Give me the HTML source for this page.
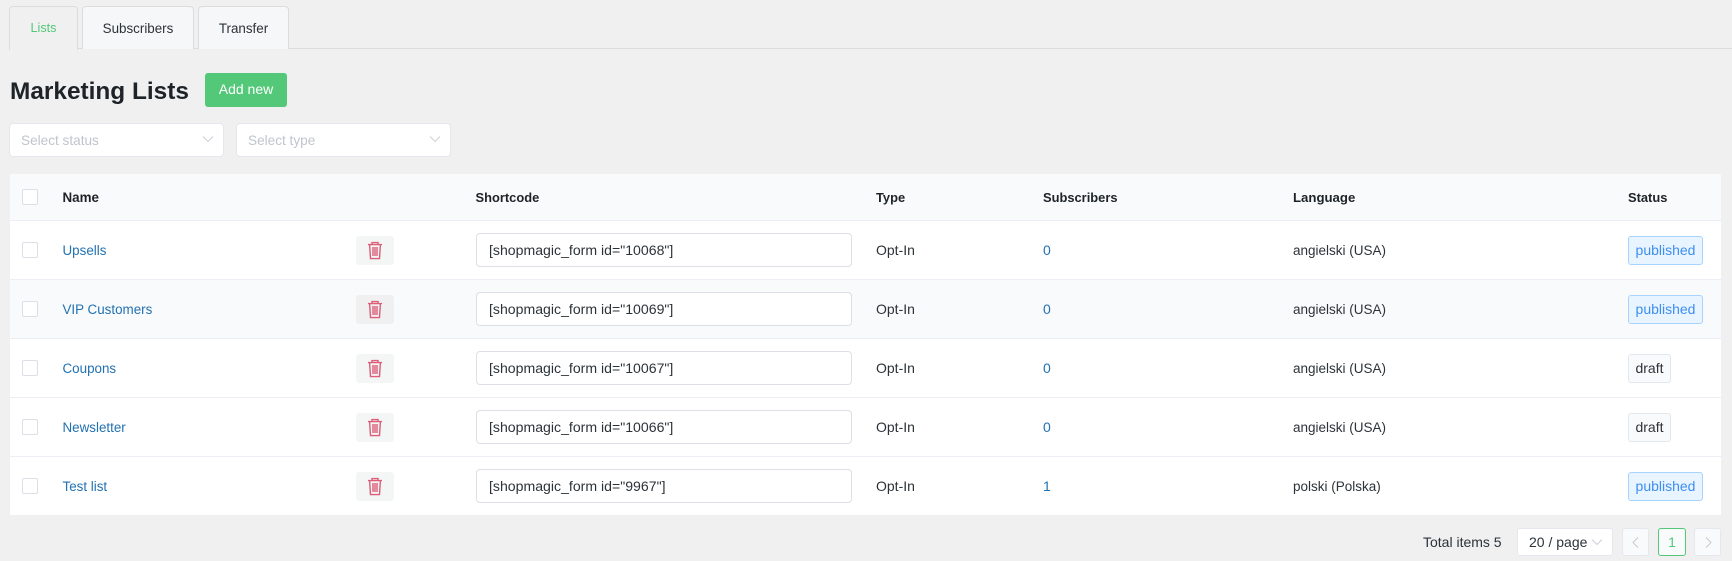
<!DOCTYPE html>
<html><head><meta charset="utf-8"><style>
html,body{margin:0;padding:0;width:1732px;height:561px;overflow:hidden;background:#f0f0f1;font-family:"Liberation Sans",sans-serif;font-size:13.4px;color:#2c3338}
div,span{position:absolute;box-sizing:border-box;white-space:nowrap}
.t{line-height:20px;height:20px}
.tab{top:6px;height:43px;border:1px solid #dcdcde;border-bottom:none;border-radius:4px 4px 0 0;background:#f6f7f9;text-align:center;line-height:43px;font-size:13.4px}
.sel{top:123px;height:34px;width:215px;background:#fff;border:1px solid #e4e7ed;border-radius:4px;color:#c0c4cc;line-height:34px;padding-left:11px;font-size:13.6px}
.row{left:10px;width:1711px;height:59px;background:#fff;border-bottom:1px solid #ebeef5}
.alt{background:#f9fafc}
.cb{left:22px;width:16px;height:16px;background:#fff;border:1px solid #dcdfe6;border-radius:2px}
.del{left:356px;width:38px;height:29px;border-radius:3px;background:#f4f5f5}
.inp{left:476px;width:376px;height:34px;background:#fff;border:1px solid #dcdfe6;border-radius:4px;line-height:32px;padding-left:12px;font-size:14.1px;color:#2c3338}
.tag{left:1628px;height:29px;border-radius:3px;line-height:27px;text-align:center;font-size:14px}
.pub{width:75px;background:#e8f4ff;border:1px solid #a9d3ff;color:#3d8ef0}
.dr{width:43px;background:#f9fafc;border:1px solid #e4e7ed;color:#2c3338}
.b{font-weight:bold;color:#1d2327;font-size:12.9px;margin-top:1px}
.a{color:#2271b1}
.n{left:62.5px;font-size:13.4px;margin-top:1px}
.o{left:876px;font-size:14px}
.l{left:1293px;font-size:13.5px;margin-top:1px}
.pg{top:528px;height:28px;border-radius:3px;border:1px solid #e4e7ed;background:#f9fafc}
svg{position:absolute}
</style></head><body>
<div style="left:9px;top:48px;width:1723px;height:1px;background:#dcdcde"></div>
<div class="tab" style="left:9px;width:69px;background:#f0f0f1;height:44px;color:#52c878;font-size:12.6px">Lists</div>
<div class="tab" style="left:82px;width:112px">Subscribers</div>
<div class="tab" style="left:198px;width:91px">Transfer</div>
<div class="b" style="left:10px;top:73px;font-size:24.4px;line-height:36px;height:36px">Marketing Lists</div>
<div style="left:205px;top:73px;width:82px;height:34px;background:#52c878;border-radius:3px;color:#fff;text-align:center;line-height:33px;font-size:14px">Add new</div>
<div class="sel" style="left:9px">Select status</div>
<svg style="left:201.5px;top:135px" width="12" height="9" viewBox="0 0 12 9"><path d="M1 1.5l5 5 5-5" fill="none" stroke="#cdd0d6" stroke-width="1"/></svg>
<div class="sel" style="left:236px">Select type</div>
<svg style="left:428.5px;top:135px" width="12" height="9" viewBox="0 0 12 9"><path d="M1 1.5l5 5 5-5" fill="none" stroke="#cdd0d6" stroke-width="1"/></svg>

<div style="left:10px;top:174px;width:1711px;height:47px;background:#f9fafc;border-bottom:1px solid #ebeef5;border-radius:2px 2px 0 0"></div>
<div class="cb" style="top:189px"></div>
<div class="t b" style="left:62.5px;top:187px;font-size:13.4px">Name</div>
<div class="t b" style="left:475.5px;top:187px">Shortcode</div>
<div class="t b" style="left:876px;top:187px">Type</div>
<div class="t b" style="left:1043px;top:187px">Subscribers</div>
<div class="t b" style="left:1293px;top:187px;font-size:13.2px">Language</div>
<div class="t b" style="left:1628px;top:187px">Status</div>

<div class="row" style="top:221px"></div>
<div class="cb" style="top:242px"></div>
<div class="t a n" style="top:240px">Upsells</div>
<div class="del" style="top:236px"></div>
<svg style="left:367px;top:241px" width="16" height="19" viewBox="0 0 16 19" fill="none" stroke="#dc5e78" stroke-width="1.4"><path d="M1 3.6h14M5 3.6V1.6h6v2M2.6 3.6l.9 14h9l.9-14M6 6v9M8 6v9M10 6v9"/></svg>
<div class="inp" style="top:233px">[shopmagic_form id="10068"]</div>
<div class="t o" style="top:240px">Opt-In</div>
<div class="t a" style="left:1043px;top:240px;font-size:14px">0</div>
<div class="t l" style="top:240px">angielski (USA)</div>
<div class="tag pub" style="top:236px">published</div>

<div class="row alt" style="top:280px"></div>
<div class="cb" style="top:301px"></div>
<div class="t a n" style="top:299px">VIP Customers</div>
<div class="del" style="top:295px;background:#f0f0f1"></div>
<svg style="left:367px;top:300px" width="16" height="19" viewBox="0 0 16 19" fill="none" stroke="#dc5e78" stroke-width="1.4"><path d="M1 3.6h14M5 3.6V1.6h6v2M2.6 3.6l.9 14h9l.9-14M6 6v9M8 6v9M10 6v9"/></svg>
<div class="inp" style="top:292px">[shopmagic_form id="10069"]</div>
<div class="t o" style="top:299px">Opt-In</div>
<div class="t a" style="left:1043px;top:299px;font-size:14px">0</div>
<div class="t l" style="top:299px">angielski (USA)</div>
<div class="tag pub" style="top:295px">published</div>

<div class="row" style="top:339px"></div>
<div class="cb" style="top:360px"></div>
<div class="t a n" style="top:358px">Coupons</div>
<div class="del" style="top:354px"></div>
<svg style="left:367px;top:359px" width="16" height="19" viewBox="0 0 16 19" fill="none" stroke="#dc5e78" stroke-width="1.4"><path d="M1 3.6h14M5 3.6V1.6h6v2M2.6 3.6l.9 14h9l.9-14M6 6v9M8 6v9M10 6v9"/></svg>
<div class="inp" style="top:351px">[shopmagic_form id="10067"]</div>
<div class="t o" style="top:358px">Opt-In</div>
<div class="t a" style="left:1043px;top:358px;font-size:14px">0</div>
<div class="t l" style="top:358px">angielski (USA)</div>
<div class="tag dr" style="top:354px">draft</div>

<div class="row" style="top:398px"></div>
<div class="cb" style="top:419px"></div>
<div class="t a n" style="top:417px">Newsletter</div>
<div class="del" style="top:413px"></div>
<svg style="left:367px;top:418px" width="16" height="19" viewBox="0 0 16 19" fill="none" stroke="#dc5e78" stroke-width="1.4"><path d="M1 3.6h14M5 3.6V1.6h6v2M2.6 3.6l.9 14h9l.9-14M6 6v9M8 6v9M10 6v9"/></svg>
<div class="inp" style="top:410px">[shopmagic_form id="10066"]</div>
<div class="t o" style="top:417px">Opt-In</div>
<div class="t a" style="left:1043px;top:417px;font-size:14px">0</div>
<div class="t l" style="top:417px">angielski (USA)</div>
<div class="tag dr" style="top:413px">draft</div>

<div class="row" style="top:457px;height:58px;border-bottom:none"></div>
<div class="cb" style="top:478px"></div>
<div class="t a n" style="top:476px">Test list</div>
<div class="del" style="top:472px"></div>
<svg style="left:367px;top:477px" width="16" height="19" viewBox="0 0 16 19" fill="none" stroke="#dc5e78" stroke-width="1.4"><path d="M1 3.6h14M5 3.6V1.6h6v2M2.6 3.6l.9 14h9l.9-14M6 6v9M8 6v9M10 6v9"/></svg>
<div class="inp" style="top:469px">[shopmagic_form id="9967"]</div>
<div class="t o" style="top:476px">Opt-In</div>
<div class="t a" style="left:1043px;top:476px;font-size:14px">1</div>
<div class="t l" style="top:476px">polski (Polska)</div>
<div class="tag pub" style="top:472px">published</div>

<div class="t" style="left:1423px;top:532px;font-size:14px">Total items 5</div>
<div class="pg" style="left:1517px;width:96px;background:#fff;line-height:27px;padding-left:11px;font-size:14px">20 / page</div>
<svg style="left:1591px;top:538px" width="12" height="9" viewBox="0 0 12 9"><path d="M1 1.5l5 5 5-5" fill="none" stroke="#cdd0d6" stroke-width="1"/></svg>
<div class="pg" style="left:1622px;width:27px"></div>
<svg style="left:1629.5px;top:536px" width="12" height="13" viewBox="0 0 12 13"><path d="M8 1.5l-5 5 5 5" fill="none" stroke="#c8c9cc" stroke-width="1"/></svg>
<div class="pg" style="left:1658px;width:28px;border-color:#52c878;color:#52c878;text-align:center;line-height:26px;font-size:14px">1</div>
<div class="pg" style="left:1694px;width:27px"></div>
<svg style="left:1701.5px;top:536px" width="12" height="13" viewBox="0 0 12 13"><path d="M4 1.5l5 5-5 5" fill="none" stroke="#c8c9cc" stroke-width="1"/></svg>
</body></html>
